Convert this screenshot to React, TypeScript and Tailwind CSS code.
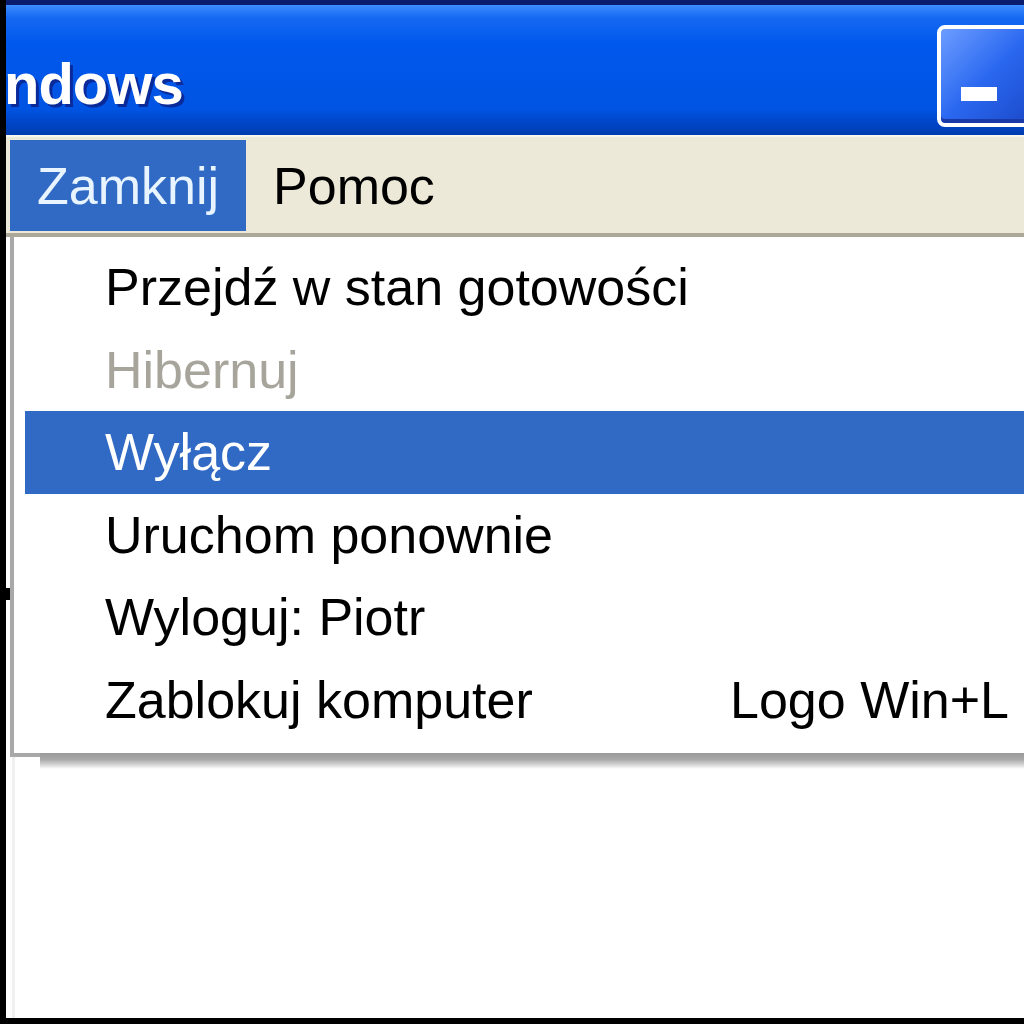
const items = [
  { label: 'Przejdź w stan gotowości' },
  { label: 'Hibernuj', disabled: true },
  { label: 'Wyłącz', active: true },
  { label: 'Uruchom ponownie' },
  { label: 'Wyloguj: Piotr' },
  { label: 'Zablokuj komputer', shortcut: 'Logo Win+L' },
]

type Item = (typeof items)[number] & { disabled?: boolean; active?: boolean; shortcut?: string }

function MenuRow({ label, disabled, active, shortcut }: Item) {
  const tone = active
    ? 'bg-[#316ac5] text-white'
    : disabled
      ? 'text-[#a7a59b]'
      : 'text-black'
  return (
    <div className={`flex h-[82.5px] items-center pl-[80px] ${tone}`}>
      <span className="w-[625px] shrink-0 whitespace-nowrap">{label}</span>
      {shortcut && <span className="whitespace-nowrap">{shortcut}</span>}
    </div>
  )
}

function MinimizeButton() {
  return (
    <div className="-mr-[14px] mt-[20px] flex h-[102px] w-[101px] shrink-0 items-end rounded-[8px] border-[4px] border-white bg-gradient-to-br from-[#6c9cff] via-[#2a68f0] to-[#1c48c8] pb-[22px] pl-[20px] shadow-[inset_0_-4px_0_#1a3aa8]">
      <div className="h-[14px] w-[36px] bg-white" />
    </div>
  )
}

export default function App() {
  return (
    <div className="relative flex h-[1024px] w-[1024px] flex-col overflow-hidden border-b-[6px] border-l-[6px] border-black bg-white font-['Liberation_Sans',Arial,sans-serif] text-[52px] leading-none">
      {/* title bar */}
      <div className="flex h-[135px] shrink-0 items-start justify-between border-t-[5px] border-[#0a1c6e] bg-[linear-gradient(to_bottom,#3d8cff_0%,#1568f2_10%,#0058ec_30%,#0054e3_80%,#0046c8_90%,#003cb0_100%)]">
        <span className="-ml-[2px] mt-[50px] text-[58px] font-bold tracking-[-1px] text-white [text-shadow:3px_3px_0_#0a2a9a]">
          ndows
        </span>
        <MinimizeButton />
      </div>

      {/* menu bar */}
      <div className="flex h-[102px] shrink-0 items-stretch border-b-[4px] border-[#aca899] bg-[#ece9d8] pl-[4px] pt-[5px] shadow-[inset_0_2px_0_#f8f6ee]">
        <div className="flex h-[91px] items-center bg-[#316ac5] px-[27px] text-[#e8f4ff]">Zamknij</div>
        <div className="flex h-[91px] items-center px-[27px] text-black">Pomoc</div>
      </div>

      {/* window body */}
      <div className="relative flex-1 bg-white">
        <div className="absolute left-[6px] top-0 h-full w-[3px] bg-[#f0f0f0]" />
        <div className="absolute left-[-6px] top-[351px] h-[12px] w-[10px] bg-black" />

        {/* dropdown */}
        <div className="absolute left-[4px] right-[-20px] top-0 border-b-[4px] border-l-[4px] border-[#a8a8a8] bg-white pb-[12px] pl-[11px] pt-[9px]">
          {items.map((item, i) => (
            <MenuRow key={i} {...(item as Item)} />
          ))}
          <div className="absolute left-[26px] right-0 top-full h-[16px] bg-[linear-gradient(to_bottom,#9a9a9a_0%,#a8a8a8_40%,#d8d8d8_75%,#ffffff_100%)]" />
        </div>
      </div>
    </div>
  )
}
